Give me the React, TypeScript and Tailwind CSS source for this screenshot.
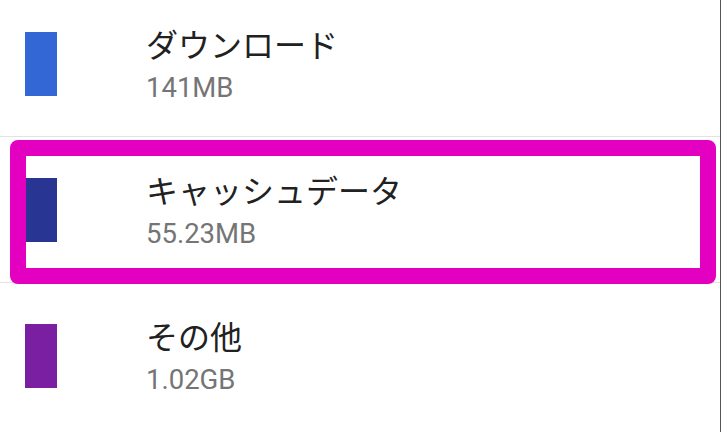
import React from "react";

const rows = [
  { title: "ダウンロード", size: "141MB", color: "bg-[#3367d6]" },
  { title: "キャッシュデータ", size: "55.23MB", color: "bg-[#283593]" },
  { title: "その他", size: "1.02GB", color: "bg-[#7b1fa2]" },
];

export default function App() {
  return (
    <div className="relative w-[721px] h-[432px] overflow-hidden bg-white border-r border-[#555555]">
      <div className="-mt-[9px] flex flex-col">
        {rows.map((r, i) => (
          <div
            key={i}
            className={`flex items-center h-[146px] pl-[25px] ${i < 2 ? "border-b border-[#e3e3e3]" : ""}`}
          >
            <div className={`w-[32px] h-[64px] shrink-0 ${r.color}`} />
            <div className="ml-[89px] flex flex-col">
              <div
                className="text-[32px] leading-[40px] text-[#212121]"
                style={{ fontFamily: '"Noto Sans CJK JP", sans-serif' }}
              >
                {r.title}
              </div>
              <div
                className="mt-[8px] text-[27.5px] leading-[34px] text-[#757575]"
                style={{ fontFamily: "Roboto, sans-serif" }}
              >
                {r.size}
              </div>
            </div>
          </div>
        ))}
      </div>
      <div className="absolute left-[10px] top-[140px] w-[706px] h-[144px] border-[16px] border-[#e400c0] rounded-[8px]" />
    </div>
  );
}
